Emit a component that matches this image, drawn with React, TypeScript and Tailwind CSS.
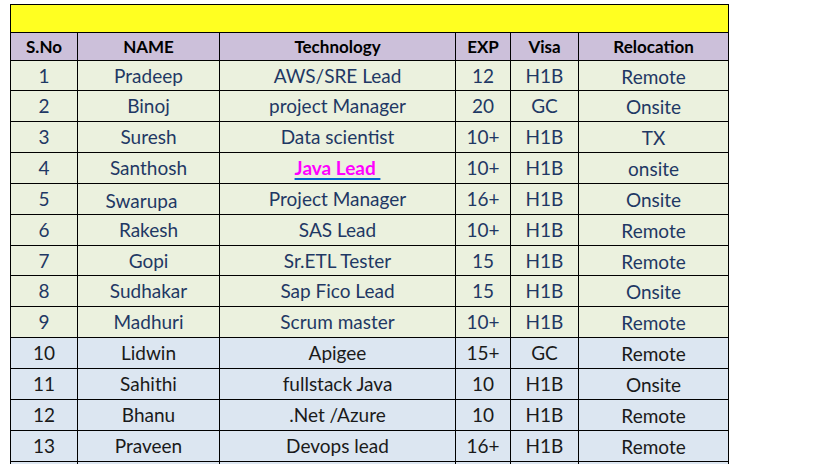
const rows = [
  ['1', 'Pradeep', 'AWS/SRE Lead', '12', 'H1B', 'Remote'],
  ['2', 'Binoj', 'project Manager', '20', 'GC', 'Onsite'],
  ['3', 'Suresh', 'Data scientist', '10+', 'H1B', 'TX'],
  ['4', 'Santhosh', 'Java Lead', '10+', 'H1B', 'onsite'],
  ['5', 'Swarupa', 'Project Manager', '16+', 'H1B', 'Onsite'],
  ['6', 'Rakesh', 'SAS Lead', '10+', 'H1B', 'Remote'],
  ['7', 'Gopi', 'Sr.ETL Tester', '15', 'H1B', 'Remote'],
  ['8', 'Sudhakar', 'Sap Fico Lead', '15', 'H1B', 'Onsite'],
  ['9', 'Madhuri', 'Scrum master', '10+', 'H1B', 'Remote'],
  ['10', 'Lidwin', 'Apigee', '15+', 'GC', 'Remote'],
  ['11', 'Sahithi', 'fullstack Java', '10', 'H1B', 'Onsite'],
  ['12', 'Bhanu', '.Net /Azure', '10', 'H1B', 'Remote'],
  ['13', 'Praveen', 'Devops lead', '16+', 'H1B', 'Remote'],
  ['', '', '', '', '', ''],
]

const headers = ['S.No', 'NAME', 'Technology', 'EXP', 'Visa', 'Relocation']

export default function App() {
  return (
    <div className="h-[464px] overflow-hidden bg-white pt-[4px] pl-[10px]" style={{ fontFamily: 'Lato, "Open Sans", sans-serif' }}>
      <table className="table-fixed border-collapse w-[718px]">
        <colgroup>
          <col className="w-[67px]" />
          <col className="w-[142px]" />
          <col className="w-[236px]" />
          <col className="w-[55px]" />
          <col className="w-[68px]" />
          <col className="w-[150px]" />
        </colgroup>
        <tbody>
          <tr className="h-[28px]">
            <td colSpan={6} className="border border-black bg-[#ffff21]"></td>
          </tr>
          <tr className="h-[28px] bg-[#ccc0da]">
            {headers.map((h) => (
              <td key={h} className="border border-black text-center text-[17px] font-bold text-black leading-none">{h}</td>
            ))}
          </tr>
          {rows.map((r, i) => {
            const blue = i >= 9
            const h = i === 0 || i === 6 ? 'h-[30px]' : 'h-[31px]'
            return (
              <tr key={i} className={`${h} ${blue ? 'bg-[#dce6f1] text-[#1a1a1a]' : 'bg-[#ebf1de] text-[#1f3864]'}`}>
                {r.map((c, j) => (
                  <td
                    key={j}
                    className={
                      j === 5
                        ? 'border border-black text-center text-[19px] leading-none pt-[1px] whitespace-nowrap'
                        : 'border border-black text-center text-[19px] leading-none pb-[1px] whitespace-nowrap'
                    }
                  >
                    {c === 'Java Lead' ? (
                      <span className="font-bold text-[#ff00ff] underline decoration-[#0066cc] decoration-2 underline-offset-[3px]">Java Lead&nbsp;</span>
                    ) : c === 'Swarupa' ? (
                      <span className="relative top-[2px] -left-[7px]">{c}</span>
                    ) : c}
                  </td>
                ))}
              </tr>
            )
          })}
        </tbody>
      </table>
    </div>
  )
}
